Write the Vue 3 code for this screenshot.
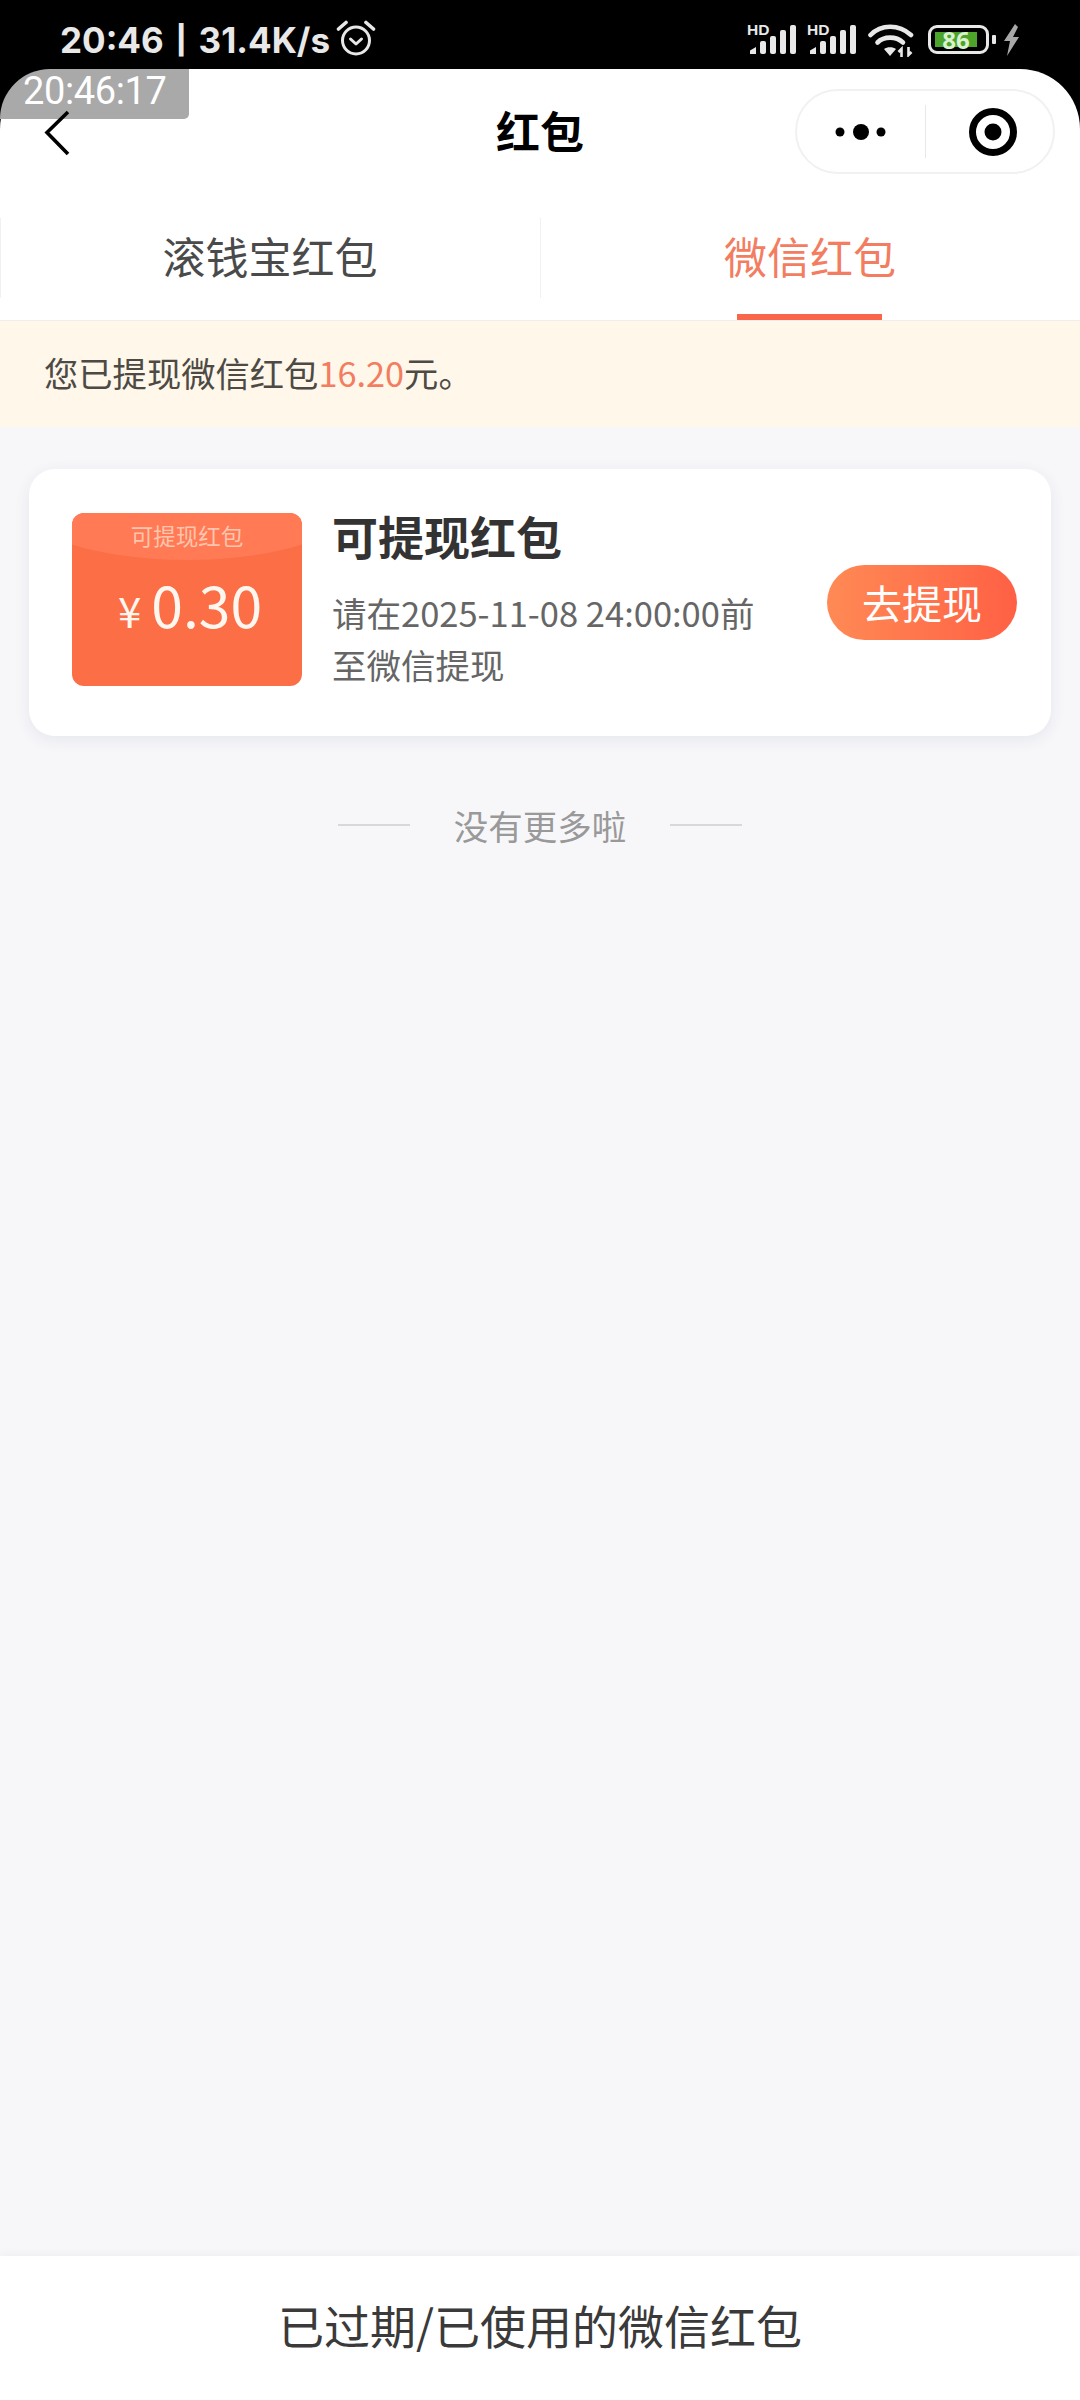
<script setup>
const tabs = [
  { name: "滚钱宝红包", active: false },
  { name: "微信红包", active: true },
];
</script>

<template>
  <div class="page">
    <div class="topArea">
      <div class="statusBar">
        <div class="statusLeft">
          <div class="clock">
            <span>20:46</span>
            <span class="pipe">|</span>
            <span>31.4K/s</span>
          </div>
          <svg class="alarm" width="40" height="38" viewBox="0 0 40 38">
            <circle cx="20" cy="21.5" r="13.5" fill="none" stroke="#e8e8e8" stroke-width="3" />
            <path d="M14.5 20 20 25 25.5 20" fill="none" stroke="#e8e8e8" stroke-width="3" stroke-linecap="round" stroke-linejoin="round" />
            <path d="M2.5 10 10 3.5M37.5 10 30 3.5" fill="none" stroke="#e8e8e8" stroke-width="3.6" stroke-linecap="round" />
          </svg>
        </div>
        <div class="statusRight">
          <svg v-for="n in 2" :key="n" class="signal" width="50" height="45" viewBox="0 -7 50 45">
            <text x="0" y="11" font-size="15.5" font-weight="700" fill="#e8e8e8" font-family="Liberation Sans, sans-serif">HD</text>
            <path d="M3 30V26.5L9 23V30Z" fill="#e8e8e8" />
            <rect x="13" y="17" width="6" height="13" rx="2" fill="#e8e8e8" />
            <rect x="23" y="12" width="6" height="18" rx="2" fill="#e8e8e8" />
            <rect x="33" y="6" width="6" height="24" rx="2" fill="#e8e8e8" />
            <rect x="43" y="1" width="6" height="29" rx="2" fill="#e8e8e8" />
          </svg>
          <svg class="wifi" width="46" height="34" viewBox="0 0 46 34">
            <path d="M2.5 12C13 1 31 1 43 12" fill="none" stroke="#e8e8e8" stroke-width="4.6" stroke-linecap="round" />
            <path d="M9.5 19.5C16 13 28 13 35 19.5" fill="none" stroke="#e8e8e8" stroke-width="4.6" stroke-linecap="round" />
            <path d="M16 26C19 23.5 25 23.5 28 26L22 33Z" fill="#e8e8e8" />
            <path d="M33.5 34V26L30.5 29M40.5 24V32L43.5 29" fill="none" stroke="#e8e8e8" stroke-width="2.6" />
          </svg>
          <div class="battery">
            <div class="batteryFill">86</div>
          </div>
          <div class="batteryNub"></div>
          <svg class="bolt" width="17" height="32" viewBox="0 0 17 32">
            <path d="M12 0 1 17H7L4 32 16 13H10L15 3Z" fill="#a8a8a8" />
          </svg>
        </div>
      </div>

      <div class="navBar">
        <div class="timeStamp">20:46:17</div>
        <svg class="back" width="30" height="48" viewBox="0 0 30 48">
          <path d="M24 3 3 23.5 24 45" fill="none" stroke="#000" stroke-width="3.6" />
        </svg>
        <h1 class="navTitle">红包</h1>
        <div class="capsule">
          <div class="capsuleMore">
            <svg width="60" height="24" viewBox="0 0 60 24">
              <circle cx="9" cy="12" r="4.5" fill="#000" />
              <circle cx="30" cy="12" r="8" fill="#000" />
              <circle cx="50" cy="12" r="4.5" fill="#000" />
            </svg>
          </div>
          <div class="capsuleLine"></div>
          <div class="capsuleClose">
            <svg width="50" height="50" viewBox="0 0 50 50">
              <circle cx="25" cy="25" r="20.5" fill="none" stroke="#000" stroke-width="7" />
              <circle cx="25" cy="25" r="8.5" fill="#000" />
            </svg>
          </div>
        </div>
      </div>
    </div>

    <div class="tabs">
      <div v-for="tab in tabs" :key="tab.name" class="tab" :class="{ active: tab.active }">
        {{ tab.name }}
      </div>
    </div>

    <div class="notice">您已提现微信红包<span class="noticeNum">16.20</span>元。</div>

    <div class="content">
      <div class="card">
        <div class="coupon">
          <div class="couponArc"></div>
          <div class="couponLabel">可提现红包</div>
          <div class="couponAmount"><span class="yen">¥</span>0.30</div>
        </div>
        <div class="cardInfo">
          <h2>可提现红包</h2>
          <p>请在2025-11-08 24:00:00前至微信提现</p>
        </div>
        <div class="withdrawBtn">去提现</div>
      </div>

      <div class="noMore">
        <span class="dash"></span>
        <span>没有更多啦</span>
        <span class="dash"></span>
      </div>
    </div>

    <div class="footer">已过期/已使用的微信红包</div>
  </div>
</template>

<style>
html,
body {
  margin: 0;
  background: #000;
}
</style>

<style scoped>
.page {
  width: 1080px;
  height: 2400px;
  display: flex;
  flex-direction: column;
  background: #f7f7fa;
  font-family: "Noto Sans CJK SC", "Noto Sans", sans-serif;
  overflow: hidden;
}

.topArea {
  flex: none;
  background: #000;
}
.statusBar {
  height: 69px;
  display: flex;
  justify-content: space-between;
  align-items: center;
  padding: 10px 60px 0;
  box-sizing: border-box;
}
.statusLeft {
  display: flex;
  align-items: center;
  gap: 6px;
}
.clock {
  display: flex;
  align-items: center;
  gap: 12px;
  font-family: Inter, sans-serif;
  font-weight: 700;
  font-size: 35px;
  line-height: 44px;
  color: #e8e8e8;
}
.pipe {
  font-size: 28px;
  font-weight: 800;
}
.alarm {
  margin-top: -4px;
}
.statusRight {
  display: flex;
  align-items: center;
}
.signal {
  margin-right: 10px;
}
.wifi {
  margin: 0 14px 0 1px;
}
.battery {
  width: 61px;
  height: 29px;
  border: 3px solid #e8e8e8;
  border-radius: 9px;
  box-sizing: border-box;
  padding: 4px;
  display: flex;
}
.batteryFill {
  width: 42px;
  height: 15px;
  background: #4ca42a;
  color: #d9f2cf;
  font-family: "Noto Sans", sans-serif;
  font-weight: 700;
  font-size: 24px;
  line-height: 15px;
  text-align: center;
}
.batteryNub {
  width: 4px;
  height: 9px;
  margin-left: 3px;
  background: #e8e8e8;
  border-radius: 1px;
}
.bolt {
  margin-left: 7px;
}

.navBar {
  position: relative;
  height: 131px;
  background: #fff;
  border-radius: 60px 60px 0 0;
  display: flex;
  align-items: center;
  justify-content: center;
}
.timeStamp {
  position: absolute;
  left: 0;
  top: 0;
  width: 189px;
  height: 50px;
  background: #a9a9a9;
  border-radius: 60px 0 6px 0;
  color: #fff;
  font-family: Roboto, sans-serif;
  font-weight: 400;
  font-size: 38px;
  letter-spacing: -0.4px;
  line-height: 44px;
  padding-left: 23px;
  box-sizing: border-box;
}
.back {
  position: absolute;
  left: 44px;
  top: 40px;
}
.navTitle {
  margin: 0 0 9px;
  font-size: 44px;
  line-height: 60px;
  font-weight: 700;
  color: #000;
}
.capsule {
  position: absolute;
  left: 795px;
  top: 20px;
  width: 260px;
  height: 85px;
  border: 2px solid #f1f1f1;
  border-radius: 43px;
  box-sizing: border-box;
  display: flex;
  align-items: center;
}
.capsuleMore {
  width: 128px;
  flex: none;
  display: flex;
  justify-content: center;
  align-items: center;
}
.capsuleClose {
  flex: 1;
  padding-left: 7px;
  display: flex;
  justify-content: center;
  align-items: center;
}
.capsuleLine {
  width: 1px;
  height: 53px;
  background: #e8e8e8;
}

.tabs {
  height: 121px;
  flex: none;
  display: flex;
  align-items: stretch;
  background: #fff;
  border-bottom: 1px solid #eeeeee;
  box-sizing: border-box;
}
.tab {
  position: relative;
  flex: 1;
  text-align: center;
  font-size: 43px;
  line-height: 110px;
  color: #4a4a4a;
}
.tab::before {
  content: "";
  position: absolute;
  left: 0;
  top: 18px;
  width: 1px;
  height: 80px;
  background: #f1f1f1;
}
.tab.active {
  color: #f27d60;
}
.tab.active::after {
  content: "";
  position: absolute;
  left: 197px;
  bottom: 0;
  width: 145px;
  height: 6px;
  background: #f9664a;
}

.notice {
  height: 106px;
  flex: none;
  background: #fff7e9;
  padding-left: 44px;
  font-size: 34.3px;
  line-height: 103px;
  color: #4d4a45;
}
.noticeNum {
  color: #f27d60;
}

.content {
  flex: 1;
  padding: 42px 29px 0;
}
.card {
  height: 267px;
  width: 1022px;
  background: #fff;
  border-radius: 26px;
  box-shadow: 0 4px 16px rgba(40, 50, 80, 0.08);
  box-sizing: border-box;
  padding: 0 34px 0 43px;
  display: flex;
  align-items: center;
}
.coupon {
  position: relative;
  flex: none;
  width: 230px;
  height: 173px;
  margin-bottom: 6px;
  background: #fb6e46;
  border-radius: 12px;
  overflow: hidden;
  color: #fff;
  text-align: center;
}
.couponArc {
  position: absolute;
  left: -50px;
  top: -63px;
  width: 330px;
  height: 110px;
  border-radius: 50%;
  background: #ff7a55;
}
.couponLabel {
  position: relative;
  margin-top: 7px;
  font-size: 22.5px;
  line-height: 30px;
  color: #ffc5ae;
}
.couponAmount {
  position: relative;
  margin-top: 13px;
  padding-left: 6px;
  font-size: 57px;
  line-height: 80px;
  color: #fff7ef;
}
.yen {
  font-size: 42px;
  margin-right: 10px;
}
.cardInfo {
  flex: 1;
  margin-left: 30px;
  padding-bottom: 10px;
  min-width: 0;
}
.cardInfo h2 {
  margin: 0 0 21px;
  font-size: 46px;
  line-height: 60px;
  font-weight: 700;
  color: #333;
}
.cardInfo p {
  margin: 0;
  width: 440px;
  font-size: 34.5px;
  line-height: 52px;
  color: #666;
}
.withdrawBtn {
  flex: none;
  width: 190px;
  height: 75px;
  border-radius: 38px;
  background: linear-gradient(90deg, #ff8a55, #ff6044);
  color: #fff;
  font-size: 40px;
  line-height: 75px;
  text-align: center;
}

.noMore {
  margin-top: 65px;
  display: flex;
  justify-content: center;
  align-items: center;
  gap: 44px;
  font-size: 34.5px;
  line-height: 48px;
  color: #999;
}
.dash {
  width: 72px;
  height: 2px;
  background: #d8d8da;
}

.footer {
  height: 144px;
  flex: none;
  background: #fff;
  box-shadow: 0 -2px 10px rgba(0, 0, 0, 0.04);
  text-align: center;
  font-size: 46px;
  line-height: 136px;
  color: #3a3a3a;
}
</style>
